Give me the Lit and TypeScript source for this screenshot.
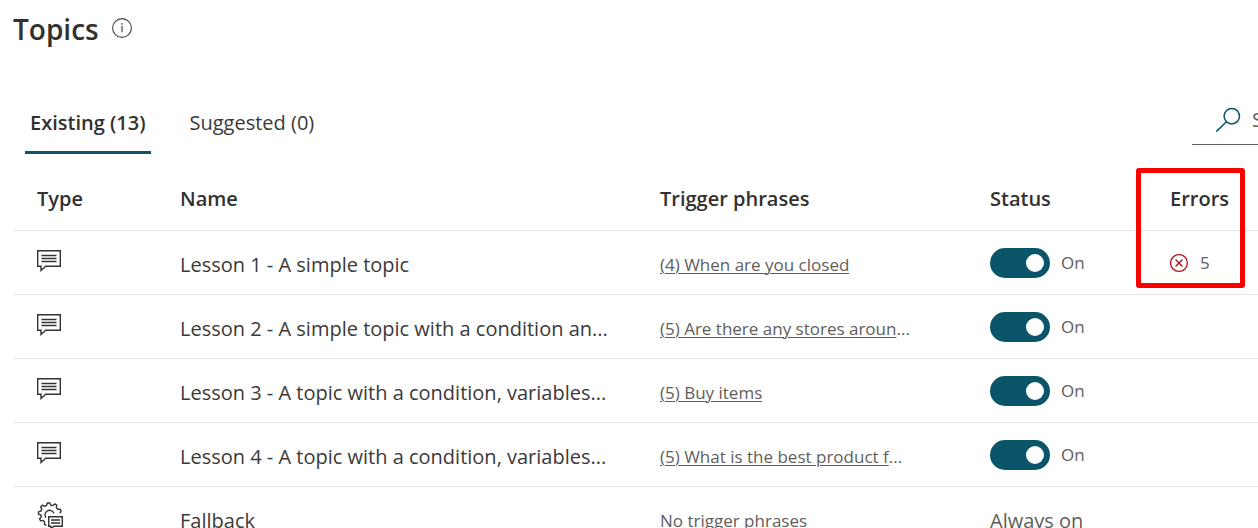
import { LitElement, html, css, svg, nothing } from "lit";
import { customElement, state } from "lit/decorators.js";

interface Topic {
  name: string;
  kind: "user" | "system";
  phrases: string;
  clipped?: boolean;
  on?: boolean;
  errors?: number;
}

const TOPICS: Topic[] = [
  { name: "Lesson 1 - A simple topic", kind: "user", phrases: "(4) When are you closed", on: true, errors: 5 },
  { name: "Lesson 2 - A simple topic with a condition an...", kind: "user", phrases: "(5) Are there any stores aroun", clipped: true, on: true },
  { name: "Lesson 3 - A topic with a condition, variables...", kind: "user", phrases: "(5) Buy items", on: true },
  { name: "Lesson 4 - A topic with a condition, variables...", kind: "user", phrases: "(5) What is the best product f", clipped: true, on: true },
  { name: "Fallback", kind: "system", phrases: "" },
];

const chatIcon = html`<svg class="icon" width="26" height="24" viewBox="0 0 26 24" role="img" aria-label="User topic">
  ${svg`<path d="M.7 1.7H23.3V17.3H8.7L4 21.5V17.3H.7Z" fill="none" stroke="#333" stroke-width="1.4"/>
  <path d="M4.5 6.5H19.5M4.5 9.5H19.5M4.5 12.5H19.5" stroke="#333" stroke-width="1.3"/>`}
</svg>`;

const gearIcon = html`<svg class="icon gear" width="28" height="28" viewBox="0 0 28 28" role="img" aria-label="System topic">
  ${svg`<path d="M22.8 12.2L24.1 10.4L23.2 8.1L20.7 8.2L19.3 6.6L19.8 4.2L17.7 2.9L15.9 4.6L13.8 4.3L12.8 2H10.3L9.6 4.4L7.6 5.3L5.4 4.1L3.7 5.9L4.8 8.1L3.9 10.1L1.5 10.8V13.2L3.9 14L4.3 16L2.5 17.7L3.6 19.9L6.1 19.4L7.7 20.9L7.3 23.3L9.4 24.4" fill="none" stroke="#333" stroke-width="1.4" stroke-linejoin="round"/>
  <path d="M8.9 16.6A4.6 4.6 0 1 1 16.9 12.2" fill="none" stroke="#333" stroke-width="1.4"/>
  <path d="M11.7 15.7H25.3V25.3H17L13.8 28V25.3H11.7Z" fill="#fff" stroke="#333" stroke-width="1.4"/>
  <path d="M14 19H23M14 22H23" stroke="#333" stroke-width="1.3"/>`}
</svg>`;

const infoIcon = html`<svg width="22" height="22" viewBox="0 0 22 22" aria-hidden="true">
  ${svg`<circle cx="11" cy="11" r="9.4" fill="none" stroke="#444" stroke-width="1.1"/>
  <path d="M11 9V15.3" stroke="#444" stroke-width="1.2"/><circle cx="11" cy="6.8" r=".85" fill="#444"/>`}
</svg>`;

const searchIcon = html`<svg width="26" height="26" viewBox="0 0 26 26" aria-hidden="true">
  ${svg`<circle cx="16.8" cy="9.2" r="7.7" fill="none" stroke="#0b556a" stroke-width="1.5"/>
  <path d="M11.4 14.7L1.3 24.6" stroke="#0b556a" stroke-width="1.5"/>`}
</svg>`;

const errorIcon = html`<svg width="19" height="20" viewBox="1 0 19 20" aria-hidden="true">
  ${svg`<circle cx="10" cy="10" r="8.4" fill="none" stroke="#b1121b" stroke-width="1.3"/>
  <path d="M6.6 6.6L13.4 13.4M13.4 6.6L6.6 13.4" stroke="#b1121b" stroke-width="1.4"/>`}
</svg>`;

@customElement("app-root")
export class AppRoot extends LitElement {
  @state() private tab = 0;

  static styles = css`
    :host {
      display: block;
      height: 100vh;
      overflow: hidden;
      background: #fff;
      color: #3b3a39;
      font: 20px/28px "Open Sans", "Noto Sans", sans-serif;
    }
    * { box-sizing: border-box; }
    svg { display: block; flex: none; }
    button, input { font: inherit; color: inherit; border: 0; background: none; padding: 0; margin: 0; }
    .title { display: flex; align-items: center; gap: 12px; padding: 8px 13px 0; }
    h1 { margin: 0; font-size: 28px; line-height: 42px; font-weight: 600; color: #323130; }
    .info { margin-bottom: 2px; }
    .bar { display: flex; align-items: flex-start; justify-content: space-between; padding: 46px 0 0 25px; }
    .tabs { display: flex; gap: 34px; }
    .tab { height: 58px; padding: 0 5px 2px; border-bottom: 3px solid transparent; white-space: nowrap; }
    .tab.active { border-color: #0b556a; font-weight: 600; color: #323130; }
    .search { display: flex; align-items: center; gap: 11px; width: 66px; height: 49px; padding-left: 23px; border-bottom: 1px solid #605e5c; overflow: hidden; }
    .search input { width: 120px; flex: none; }
    .search input::placeholder { color: #605e5c; opacity: 1; }
    .grid { position: relative; margin: 14px 0 0 13px; }
    table { width: 100%; table-layout: fixed; border-collapse: separate; border-spacing: 0; }
    th, td { padding: 0 0 0 24px; text-align: left; white-space: nowrap; border-bottom: 1px solid #e6e6e6; }
    th { height: 63px; font-weight: 600; color: #323130; }
    td { height: 64px; padding-top: 4px; }
    .type { width: 143px; }
    .phrases { width: 330px; }
    .status { width: 180px; }
    .errors { width: 112px; }
    .icon { margin-bottom: 8px; }
    .gear { margin-bottom: 12px; }
    .small, .small a { font-size: 17px; color: #605e5c; }
    .small a { text-underline-offset: 2px; text-decoration-thickness: 1px; }
    .muted { color: #605e5c; }
    .pair { display: flex; align-items: center; gap: 11px; margin-bottom: 4px; font-size: 17px; color: #605e5c; }
    .switch { appearance: none; width: 60px; height: 30px; padding: 6px; border-radius: 15px; background: #8a8886; display: flex; cursor: pointer; }
    .switch::before { content: ""; width: 18px; height: 18px; border-radius: 50%; background: #fff; }
    .switch:checked { background: #0b556a; justify-content: flex-end; }
    .callout { position: absolute; top: 0; right: 13px; width: 109px; height: 120px; border: 5px solid #f00; border-radius: 3px; pointer-events: none; }
  `;

  private row(t: Topic, i: number) {
    return html`<tr>
      <td>${t.kind === "user" ? chatIcon : gearIcon}</td>
      <td>${t.name}</td>
      <td class="small">${t.phrases ? html`<a href="#topic-${i + 1}">${t.phrases}</a>${t.clipped ? "..." : nothing}` : "No trigger phrases"}</td>
      <td class="muted">${t.on === undefined
        ? "Always on"
        : html`<div class="pair"><input class="switch" type="checkbox" role="switch" id="on-${i}" .checked=${t.on} /><label for="on-${i}">On</label></div>`}</td>
      <td>${t.errors ? html`<div class="pair">${errorIcon}<span>${t.errors}</span></div>` : nothing}</td>
    </tr>`;
  }

  render() {
    const tabs = ["Existing (13)", "Suggested (0)"];
    return html`
      <header class="title"><h1>Topics</h1><button class="info" aria-label="About topics">${infoIcon}</button></header>
      <div class="bar">
        <div class="tabs" role="tablist">
          ${tabs.map((label, i) => html`<button role="tab" class="tab ${this.tab === i ? "active" : ""}" aria-selected=${this.tab === i} @click=${() => (this.tab = i)}>${label}</button>`)}
        </div>
        <label class="search">${searchIcon}<input type="text" aria-label="Search" placeholder="Search" /></label>
      </div>
      <div class="grid">
        <table>
          <thead><tr>
            <th class="type">Type</th><th>Name</th><th class="phrases">Trigger phrases</th><th class="status">Status</th><th class="errors">Errors</th>
          </tr></thead>
          <tbody>${TOPICS.map((t, i) => this.row(t, i))}</tbody>
        </table>
        <div class="callout"></div>
      </div>`;
  }
}
